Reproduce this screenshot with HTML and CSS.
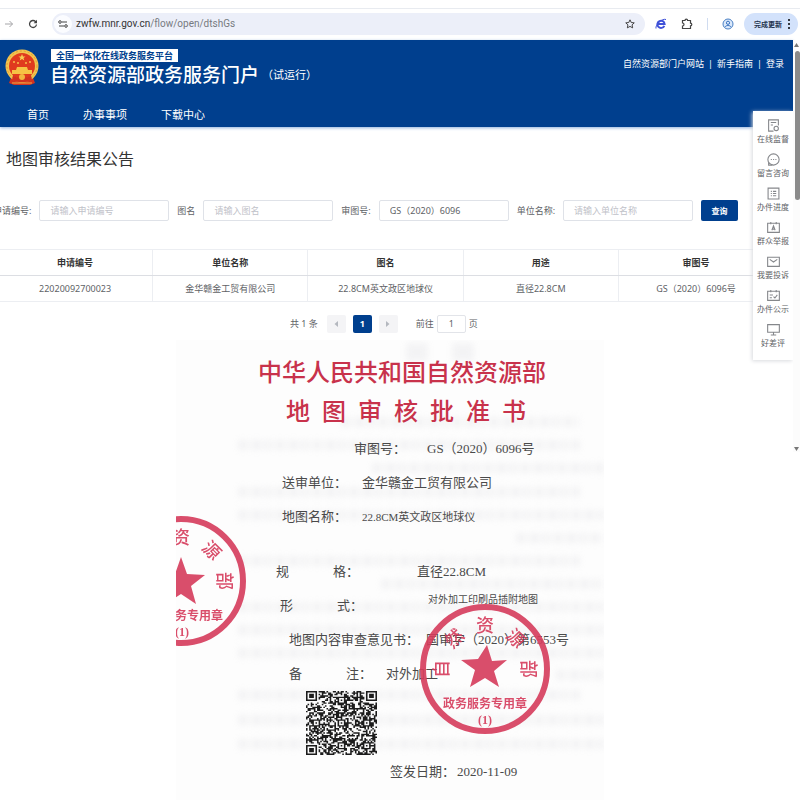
FILE: index.html
```html
<!DOCTYPE html>
<html lang="zh-CN">
<head>
    <meta charset="UTF-8">
    <meta name="viewport" content="width=device-width, initial-scale=1.0">
    <title>地图审核结果公告</title>
    <link rel="stylesheet" href="styles.css">
</head>
<body>
    <div class="browser">
        <button type="button" class="tool forward" aria-label="前进">
            <svg width="10" height="10" viewBox="0 0 10 10"><path d="M1 5h7.5M5.500 2l3 3-3 3" fill="none" stroke="#a5a5a8"/></svg>
        </button>
        <button type="button" class="tool reload" aria-label="刷新">
            <svg width="10" height="10" viewBox="0 0 10 10"><path d="M8.500 5.500a3.500 3.500 0 1 1-1-3L8.600 3.600" fill="none" stroke="#444" stroke-width="1.300"/><path d="M9 .8v3.400H5.600z" fill="#444"/></svg>
        </button>
        <div class="address">
            <span class="site">
                <svg width="10" height="8" viewBox="0 0 10 8"><path d="M4 2h5M1 6h5" stroke="#444" stroke-width="1.200"/><circle cx="2" cy="2" r="1.300" fill="none" stroke="#444"/><circle cx="8" cy="6" r="1.300" fill="none" stroke="#444"/></svg>
            </span>
            <span class="url"><b>zwfw.mnr.gov.cn</b>/flow/open/dtshGs</span>
            <svg width="10" height="10" viewBox="0 0 10 10"><path d="M5 .8l1.250 2.700 3 .35-2.200 2 .6 3L5 7.400 2.350 8.850l.6-3-2.200-2 3-.35z" fill="none" stroke="#444"/></svg>
        </div>
        <button type="button" class="tool" aria-label="IE">
            <svg width="12" height="12" viewBox="0 0 12 12"><path d="M9.300 7.800A3.600 3.600 0 1 1 9.600 6H3" fill="none" stroke="#3f51d8" stroke-width="2"/><path d="M1 10.500C0 7 7 0 11 1.500" fill="none" stroke="#3f51d8"/></svg>
        </button>
        <button type="button" class="tool" aria-label="扩展程序">
            <svg width="12" height="12" viewBox="0 0 12 12"><path d="M1.500 2.500H4a1.300 1.300 0 0 1 2.600 0H9.500v2.700a1.300 1.300 0 0 1 0 2.600v2.700h-8V8a1.500 1.500 0 0 0 0-3z" fill="none" stroke="#444" stroke-width="1.200"/></svg>
        </button>
        <span class="split"></span>
        <button type="button" class="tool" aria-label="用户">
            <svg width="12" height="12" viewBox="0 0 12 12"><circle cx="6" cy="6" r="5" fill="#dbe9fb" stroke="#4a80c4"/><circle cx="6" cy="4.800" r="1.600" fill="none" stroke="#3a74c0"/><path d="M3 9c1-2 5-2 6 0" fill="none" stroke="#3a74c0"/></svg>
        </button>
        <button type="button" class="update">完成更新
            <svg width="2" height="10" viewBox="0 0 2 10"><circle cx="1" cy="1" r="1"/><circle cx="1" cy="5" r="1"/><circle cx="1" cy="9" r="1"/></svg>
        </button>
    </div>

    <div class="page">
        <header>
            <div class="top">
                <svg class="emblem" width="36" height="38" viewBox="0 0 36 38">
                    <path d="M8 26h20l3 8-5 2H10l-5-2z" fill="#d3321f"/>
                    <circle cx="18" cy="17" r="16.500" fill="#f2c44e"/>
                    <circle cx="18" cy="17" r="15" fill="none" stroke="#e39a35" stroke-dasharray="2 2"/>
                    <circle cx="18" cy="17" r="13" fill="#e03a1e"/>
                    <path d="M18 5l1 2.500h2.500l-2 1.500.8 2.500L18 10l-2.300 1.500.8-2.500-2-1.500H17z" fill="#f7cf55"/>
                    <g fill="#f7c04a"><circle cx="10" cy="13" r="1"/><circle cx="14" cy="14" r="1"/><circle cx="22" cy="14" r="1"/><circle cx="26" cy="13" r="1"/></g>
                    <path d="M13 18h10l1 3h4v4H8v-4h4z" fill="#f6c344"/>
                    <path d="M9 26c3 4 15 4 18 0l1 5c-4 3-16 3-20 0z" fill="#d3321f"/>
                    <circle cx="18" cy="28" r="3" fill="#f2b640"/>
                    <path d="M8 34h20" stroke="#eeb040"/>
                </svg>
                <div class="brand">
                    <span class="platform">全国一体化在线政务服务平台</span>
                    <div class="name">自然资源部政务服务门户<small>（试运行）</small></div>
                </div>
                <div class="links">
                    <a href="#">自然资源部门户网站</a><i>|</i><a href="#">新手指南</a><i>|</i><a href="#">登录</a>
                </div>
            </div>
            <nav>
                <a href="#">首页</a>
                <a href="#">办事事项</a>
                <a href="#">下载中心</a>
            </nav>
        </header>

        <main>
            <h1>地图审核结果公告</h1>
            <form class="search">
                <label for="sqbh">申请编号:</label>
                <input type="text" id="sqbh" placeholder="请输入申请编号">
                <label for="tm">图名</label>
                <input type="text" id="tm" placeholder="请输入图名">
                <label for="sth">审图号:</label>
                <input type="text" id="sth" value="GS（2020）6096">
                <label for="dwmc">单位名称:</label>
                <input type="text" id="dwmc" placeholder="请输入单位名称">
                <button type="button">查询</button>
            </form>
            <table>
                <thead>
                    <tr><th>申请编号</th><th>单位名称</th><th>图名</th><th>用途</th><th>审图号</th></tr>
                </thead>
                <tbody>
                    <tr><td>22020092700023</td><td>金华赣金工贸有限公司</td><td>22.8CM英文政区地球仪</td><td>直径22.8CM</td><td>GS（2020）6096号</td></tr>
                </tbody>
            </table>
            <div class="pager">
                <span class="total">共 1 条</span>
                <button type="button" aria-label="上一页"><svg width="6" height="8" viewBox="0 0 6 8"><path d="M5 1L1.500 4 5 7z" fill="#b4b8bf"/></svg></button>
                <button type="button" class="current">1</button>
                <button type="button" aria-label="下一页"><svg width="6" height="8" viewBox="0 0 6 8"><path d="M1 1l3.500 3L1 7z" fill="#b4b8bf"/></svg></button>
                <label for="goto">前往</label>
                <input type="text" id="goto" value="1">
                <span>页</span>
            </div>
        </main>

        <aside class="side">
            <a href="#"><svg viewBox="0 0 12 12"><path d="M10.500 6V.8h-9v10.400H6M3.500 3.200h5M3.500 5.500h2"/><circle cx="8.500" cy="8.700" r="2"/></svg>在线监督</a>
            <a href="#"><svg viewBox="0 0 12 12"><circle cx="6" cy="6" r="5.200"/><path d="M3.500 6h1M5.600 6h1M7.700 6h1M1.500 8.500v2.700H5"/></svg>留言咨询</a>
            <a href="#"><svg viewBox="0 0 12 12"><path d="M1 1h10v10H1zM3.500 4h1M5.500 4h3M3.500 6h1M5.500 6h3M3.500 8h1M5.500 8h3"/></svg>办件进度</a>
            <a href="#"><svg viewBox="0 0 12 12"><path d="M.6 2h10.800v8.500H.6zM3.500 1v2M8.500 1v2M4.500 8.500L6 4.500l1.500 4M5 7.500h2"/></svg>群众举报</a>
            <a href="#"><svg viewBox="0 0 12 12"><path d="M.6 2h10.800v8.500H.6zM2.500 4L6 6.500 9.500 4"/></svg>我要投诉</a>
            <a href="#"><svg viewBox="0 0 12 12"><path d="M.6 2h10.800v8.500H.6zM3.500 1v2M8.500 1v2M2.500 5.500h3M2.500 8h2M6 7l1.300 1.300 2.200-2.800"/></svg>办件公示</a>
            <a href="#"><svg viewBox="0 0 12 12"><path d="M.6 1.500h10.800v7H.6zM6 8.500v2.200M3.500 11h5"/></svg>好差评</a>
        </aside>

        <div class="scrollbar">
            <svg width="7" height="6" viewBox="0 0 7 6"><path d="M1 5l2.500-4L6 5z" fill="#777"/></svg>
            <span class="thumb"></span>
            <svg width="7" height="6" viewBox="0 0 7 6"><path d="M1 1l2.500 4L6 1z" fill="#777"/></svg>
        </div>
    </div>

    <section class="cert">
        <!-- print showing through from the back of the sheet -->
        <svg class="back" viewBox="0 0 428 460" aria-hidden="true">
            <g fill="none" stroke="#ededef" stroke-width="10" stroke-dasharray="10 3 11 2 8 3">
                <path d="M230 12h22M276 12h22" stroke-width="18" stroke-dasharray="none"/>
                <path d="M165 82h238M62 105h342M196 128h232M62 152h342M62 175h366M340 198h88M62 221h342M205 244h223M62 267h366M62 290h366M62 313h366M380 335h48M62 355h342M62 380h366M62 404h366"/>
            </g>
        </svg>
        <h2>中华人民共和国自然资源部</h2>
        <h3>地&#8194;图&#8194;审&#8194;核&#8194;批&#8194;准&#8194;书</h3>
        <div class="row number"><span class="label">审图号：</span><span>GS（2020）6096号</span></div>
        <div class="row unit"><span class="label">送审单位：</span><span>金华赣金工贸有限公司</span></div>
        <div class="row map"><span class="label">地图名称：</span><span class="small">22.8CM英文政区地球仪</span></div>
        <div class="row spec"><span class="label"><span>规</span><span>格：</span></span><span>直径22.8CM</span></div>
        <div class="row form"><span class="label"><span>形</span><span>式：</span></span><span class="tiny">对外加工印刷品插附地图</span></div>
        <div class="row opinion"><span class="label">地图内容审查意见书：</span><span>国审字（2020）第6553号</span></div>
        <div class="row remark"><span class="label"><span>备</span><span>注：</span></span><span>对外加工</span></div>
        <svg class="qr" id="qr" viewBox="0 0 45 45" preserveAspectRatio="none" role="img" aria-label="二维码"></svg>
        <div class="row date"><span class="label">签发日期：</span><span>2020-11-09</span></div>

        <svg class="seal seal-left" viewBox="62 0 72 134">
            <circle class="ring" cx="67" cy="67" r="62"/>
            <path class="star" d="M67 43l6 17 18 1-14 11 5 18-15-10-15 10 5-18-14-11 18-1z"/>
            <g class="seal-text">
                <text x="67" y="30">资</text>
                <text x="67" y="30" transform="rotate(45 67 67)">源</text>
                <text x="67" y="30" transform="rotate(90 67 67)">部</text>
            </g>
            <g class="seal-line"><text x="67" y="106">政务服务专用章</text><text x="68" y="122">(1)</text></g>
        </svg>
        <svg class="seal seal-right" viewBox="0 0 134 134">
            <circle class="ring" cx="67" cy="67" r="62"/>
            <path class="star" d="M69 43l5 16 15-1-13 11 5 16-14-9-15 9 5-17-14-10 17-1z"/>
            <g class="seal-text">
                <text x="67" y="30" transform="rotate(-90 67 67)">自</text>
                <text x="67" y="30" transform="rotate(-45 67 67)">然</text>
                <text x="67" y="30">资</text>
                <text x="67" y="30" transform="rotate(45 67 67)">源</text>
                <text x="67" y="30" transform="rotate(90 67 67)">部</text>
            </g>
            <g class="seal-line"><text x="67" y="106">政务服务专用章</text><text x="67" y="122">(1)</text></g>
        </svg>
    </section>

    <script>
        var n = 45;
        var seed = 6096;
        var d = "";
        function rand() {
            seed = (seed * 1103515245 + 12345) % 2147483648;
            return seed / 2147483648;
        }
        // square marks: three in the corners, small ones inside
        var marks = [[3, 3, 3], [41, 3, 3], [3, 41, 3], [22, 6, 2], [6, 22, 2], [22, 22, 2], [38, 22, 2], [22, 38, 2], [38, 38, 2]];
        function dark(x, y) {
            for (var i = 0; i < marks.length; i++) {
                var m = marks[i];
                var r = Math.max(Math.abs(x - m[0]), Math.abs(y - m[1]));
                if (r <= m[2]) {
                    return r == m[2] || r < m[2] - 1;
                }
                if (m[2] == 3 && r == 4) {
                    return false;
                }
            }
            return rand() < 0.53;
        }
        for (var y = 0; y < n; y++) {
            for (var x = 0; x < n; x++) {
                if (dark(x, y)) {
                    d += "M" + x + " " + y + "h1v1h-1z";
                }
            }
        }
        document.getElementById("qr").innerHTML = '<path fill="#1c1c1c" d="' + d + '"/>';
    </script>
</body>
</html>
```
FILE: styles.css
```css
* {
    box-sizing: border-box;
}

body {
    margin: 0;
    background: #fff;
    color: #606266;
    font-family: "Noto Sans", "Noto Sans CJK SC", sans-serif;
    font-size: 9px;
    overflow-x: hidden;
}

a {
    color: inherit;
    text-decoration: none;
}

button,
input {
    font: inherit;
    color: inherit;
    padding: 0;
    border: none;
    border-radius: 2px;
}

/* browser toolbar */
.browser {
    display: flex;
    align-items: center;
    gap: 14px;
    height: 32px;
    margin-top: 8px;
    padding: 0 2px 2px 4px;
    border-top: 1px solid #e8ebf0;
}

.tool {
    display: flex;
    background: none;
}

.address {
    flex: 1;
    display: flex;
    align-items: center;
    gap: 4px;
    height: 22px;
    margin-right: -4px;
    padding: 0 10px 0 2px;
    border-radius: 11px;
    background: #eceff9;
}

.site {
    display: flex;
    align-items: center;
    justify-content: center;
    width: 18px;
    height: 18px;
    border-radius: 50%;
    background: #fbfcff;
}

.url {
    flex: 1;
    font-family: Roboto, sans-serif;
    font-size: 10px;
    color: #777a80;
}

.url b {
    font-weight: normal;
    color: #333;
}

.split {
    width: 1px;
    height: 12px;
    background: #d0dcf0;
}

.update {
    display: flex;
    align-items: center;
    gap: 6px;
    height: 22px;
    margin-left: -4px;
    padding: 0 8px 0 10px;
    border-radius: 11px;
    background: #d3e2fb;
    color: #24344f;
    font-size: 7px;
    font-weight: bold;
}

/* portal */
.page {
    position: relative;
}

header {
    height: 87px;
    margin-right: 7px;
    background: #003f8e;
    color: #fff;
    box-shadow: 0 1px 3px #8fb0dd;
}

.top {
    display: flex;
    align-items: flex-start;
    gap: 10px;
    height: 63px;
    padding: 9px 9px 0 4px;
}

.brand {
    flex: 1;
}

.platform {
    display: block;
    width: max-content;
    margin-left: 1px;
    padding: 0 5px;
    background: #fff;
    color: #003f8e;
    font-size: 9px;
    font-weight: bold;
    line-height: 13px;
}

.name {
    display: flex;
    align-items: center;
    font-size: 19px;
    font-weight: 500;
    line-height: 26px;
}

.name small {
    margin-left: 3px;
    font-size: 11px;
    font-weight: normal;
}

.links {
    display: flex;
    gap: 4px;
    padding-top: 8px;
    line-height: 13px;
}

.links i {
    font-style: normal;
}

nav {
    display: flex;
    gap: 34px;
    padding-left: 27px;
    font-size: 11px;
    line-height: 24px;
}

main {
    margin-right: 7px;
    overflow: hidden;
}

h1 {
    margin: 20px 6px 29px;
    color: #333;
    font-size: 16px;
    font-weight: normal;
    line-height: 24px;
}

.search {
    display: flex;
    align-items: center;
    gap: 8px;
    margin-left: -7px;
    padding-right: 55px;
}

.search label {
    flex: none;
}

.search input {
    flex: 1;
    min-width: 0;
    height: 21px;
    padding: 0 10px;
    border: 1px solid #dfe2e8;
}

.search input::placeholder {
    color: #bfc2c9;
}

.search button {
    width: 37px;
    height: 21px;
    background: #003f8e;
    color: #fff;
    font-size: 8px;
    font-weight: bold;
}

table {
    width: 98%;
    margin: 28px 0 0 -3px;
    border-collapse: collapse;
    table-layout: fixed;
    text-align: center;
}

th,
td {
    height: 26px;
    padding: 0;
    border: 1px solid #eceef2;
}

th {
    color: #333;
    border-bottom-color: #dcdee3;
}

.pager {
    display: flex;
    align-items: center;
    gap: 7px;
    height: 38px;
    margin-left: 290px;
    padding-top: 5px;
}

.pager .total {
    margin-right: 2px;
}

.pager button {
    display: flex;
    align-items: center;
    justify-content: center;
    width: 19px;
    height: 18px;
    background: #f4f4f6;
}

.pager .current {
    background: #003f8e;
    color: #fff;
    font-weight: bold;
}

.pager label {
    margin-left: 11px;
}

.pager input {
    width: 29px;
    height: 18px;
    margin: 0 -4px;
    border: 1px solid #e2e4e9;
    text-align: center;
}

.side {
    position: absolute;
    top: 71px;
    right: 7px;
    width: 40px;
    padding: 8px 0 3px;
    background: #fff;
    box-shadow: -1px 1px 4px #d8dade;
    font-size: 8px;
}

.side a {
    display: flex;
    flex-direction: column;
    align-items: center;
    height: 34px;
    line-height: 14px;
    white-space: nowrap;
}

.side svg {
    width: 13px;
    height: 13px;
    fill: none;
    stroke: #85878b;
}

.scrollbar {
    position: absolute;
    top: 0;
    right: 0;
    display: flex;
    flex-direction: column;
    width: 7px;
    height: 412px;
    padding-top: 2px;
    background: #fcfcfc;
}

.thumb {
    width: 5px;
    height: 149px;
    margin: 3px 0 auto 2px;
    border-radius: 3px;
    background: #8b8b8b;
}

/* certificate scan */
.cert {
    position: relative;
    width: 428px;
    margin-left: 22%;
    padding-top: 14px;
    background: #fdfdfd;
    color: #4a4a4a;
    font-family: "Liberation Serif", "Noto Sans CJK SC", serif;
    font-size: 13px;
    overflow: hidden;
}

.cert h2,
.cert h3 {
    position: relative;
    margin: 0;
    color: #c8324b;
    font-size: 24px;
    font-weight: 500;
    line-height: 39px;
}

.cert h2 {
    padding-left: 82px;
}

.cert h3 {
    padding-left: 110px;
}

.row {
    position: relative;
    display: flex;
    height: 34px;
    line-height: 34px;
    white-space: nowrap;
}

.label {
    flex: none;
    display: flex;
    justify-content: space-between;
}

.number {
    padding-left: 178px;
}

.number .label {
    width: 73px;
}

.unit,
.map {
    padding-left: 106px;
}

.unit .label,
.map .label {
    width: 80px;
}

.small {
    font-size: 11px;
}

.tiny {
    font-size: 10px;
    line-height: 22px;
}

.spec {
    margin-top: 21px;
    padding-left: 100px;
}

.spec .label,
.form .label,
.remark .label {
    width: 83px;
}

.spec .label {
    margin-right: 58px;
}

.form {
    padding-left: 104px;
}

.form .label {
    margin-right: 65px;
}

.opinion {
    padding-left: 113px;
}

.opinion .label {
    width: 137px;
}

.remark {
    padding-left: 113px;
}

.remark .label {
    margin-right: 14px;
}

.qr {
    position: relative;
    display: block;
    width: 71px;
    height: 64px;
    margin-left: 130px;
}

.date {
    height: 47px;
    padding-left: 214px;
}

.date .label {
    width: 67px;
}

.back {
    position: absolute;
    top: 0;
    left: 0;
    width: 428px;
    filter: blur(3px);
    opacity: 0.6;
}

.seal {
    position: absolute;
    height: 134px;
    opacity: 0.9;
}

.seal-left {
    top: 174px;
    left: 0;
    width: 72px;
}

.seal-right {
    top: 262px;
    left: 242px;
    width: 134px;
}

.ring {
    fill: none;
    stroke: #d63c5c;
    stroke-width: 6;
}

.star,
.seal text {
    fill: #d63c5c;
}

.seal-text {
    font-size: 18px;
    font-weight: 500;
    text-anchor: middle;
}

.seal-line {
    font-size: 12px;
    font-weight: bold;
    text-anchor: middle;
}
```
